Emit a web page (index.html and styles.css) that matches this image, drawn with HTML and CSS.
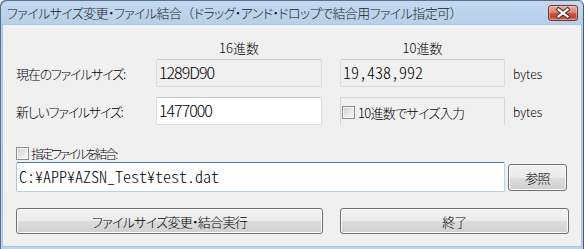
FILE: index.html
```html
<!DOCTYPE html>
<html lang="ja">
<head>
<meta charset="utf-8">
<title>ファイルサイズ変更・ファイル結合</title>
<link rel="stylesheet" href="styles.css">
</head>
<body>
<div class="window">
  <div class="titlebar">
    <div class="title">ファイルサイズ変更・ファイル結合<span class="fw">（</span>ドラッグ・アンド・ドロップで結合用ファイル指定可<span class="fw">）</span></div>
    <div class="close">
      <svg width="30" height="16" viewBox="0 0 30 16">
        <path d="M10.5 4.5 L19.5 11.5 M19.5 4.5 L10.5 11.5" stroke="#4a3a38" stroke-width="4.2" stroke-linecap="square" fill="none"/>
        <path d="M10.5 4.5 L19.5 11.5 M19.5 4.5 L10.5 11.5" stroke="#ffffff" stroke-width="2.2" stroke-linecap="square" fill="none"/>
      </svg>
    </div>
  </div>
  <div class="client">
    <div class="row head">
      <div class="label"></div>
      <div class="colhead hex">16進数</div>
      <div class="colhead dec">10進数</div>
    </div>
    <div class="row">
      <div class="label">現在のファイルサイズ:</div>
      <div class="field hex readonly"><span class="num">1289D90</span></div>
      <div class="field dec readonly"><span class="mono">19,438,992</span></div>
      <div class="unit">bytes</div>
    </div>
    <div class="row gap">
      <div class="label">新しいファイルサイズ:</div>
      <div class="field hex edit"><span class="num">1477000</span></div>
      <div class="groupbox dec">
        <span class="cb"></span><span class="cblabel">10進数でサイズ入力</span>
      </div>
      <div class="unit">bytes</div>
    </div>
    <div class="checkrow">
      <span class="cb"></span><span class="cblabel tight">指定ファイルを結合:</span>
    </div>
    <div class="pathrow">
      <div class="pathbox"><span class="mono">C:¥APP¥AZSN_Test¥test.dat</span></div>
      <div class="btn small">参照</div>
    </div>
    <div class="btnrow">
      <div class="btn exec">ファイルサイズ変更・結合実行</div>
      <div class="btn quit">終了</div>
    </div>
  </div>
</div>
</body>
</html>
```
FILE: styles.css
```css
* { box-sizing: border-box; }
html, body { margin: 0; padding: 0; background: #ffffff; }
body {
  font-family: "Noto Sans CJK JP", "Noto Sans", sans-serif;
  font-size: 13px;
  font-weight: 300;
  color: #000;
}
.window {
  width: 584px;
  height: 249px;
  display: flex;
  flex-direction: column;
  background: linear-gradient(180deg, #c4d9f0 0px, #b7cfea 25px, #bcd4ee 100%);
  border-radius: 6px 6px 0 0;
  box-shadow: inset 1px 1px 0 #5b6f86, inset -1px 0 0 #47596e;
  overflow: hidden;
}
.titlebar {
  height: 25px;
  display: flex;
  align-items: flex-start;
  flex: none;
}
.title {
  flex: 1;
  padding-left: 7px;
  padding-top: 4px;
  line-height: 17px;
  font-size: 13px;
  letter-spacing: -0.6px;
  font-feature-settings: "palt";
  color: #1b1b1b;
  white-space: nowrap;
}
.title .fw { font-feature-settings: normal; }
.close {
  width: 30px;
  height: 16px;
  margin-top: 5px;
  margin-right: 6px;
  border: 1px solid #7a3127;
  border-radius: 3px;
  background: linear-gradient(180deg, #e9aa9d 0%, #d98676 45%, #c8523f 55%, #c24a37 80%, #d3735f 100%);
  box-shadow: inset 0 0 0 1px rgba(255,255,255,0.35);
  display: flex;
  align-items: center;
  justify-content: center;
}
.close svg { display: block; margin: -1px; }
.client {
  flex: 1;
  margin: 0 3px 3px 3px;
  background: #f0f0f0;
  padding: 15px 0 12px 13px;
  box-shadow: 0 0 0 1px #a9c4e2;
}
.row {
  display: flex;
  align-items: center;
  height: 28px;
  font-feature-settings: "palt";
}
.row.head { height: 19px; align-items: flex-start; }
.row.gap { margin-top: 10px; }
.label { width: 140px; flex: none; letter-spacing: -1.2px; }
.colhead { line-height: 16px; text-align: center; }
.hex { width: 166px; flex: none; }
.dec { width: 165px; flex: none; margin-left: 18px; }
.field {
  height: 28px;
  border: 1px solid #dcdcdc;
  border-top-color: #c8c8c8;
  border-radius: 2px;
  padding: 3px 2px 0 2px;
  line-height: 18px;
  white-space: nowrap;
}
.readonly { background: #f0f0f0; }
.edit { background: #ffffff; }
.num {
  font-family: "Noto Sans CJK JP", sans-serif;
  font-weight: 300;
  font-size: 16px;
  letter-spacing: -1px;
}
.mono {
  font-family: "Noto Sans CJK JP", "Noto Sans Mono CJK JP", monospace;
  font-weight: 300;
  font-size: 16px;
  font-feature-settings: "hwid";
  letter-spacing: 0;
}
.unit {
  margin-left: 8px;
  font-family: "Noto Sans CJK JP", sans-serif;
  font-weight: 300;
  font-size: 12px;
  font-feature-settings: normal;
}
.groupbox {
  height: 28px;
  align-self: flex-start;
  border: 1px solid #d5d5d5;
  border-bottom: none;
  display: flex;
  align-items: center;
  padding-left: 1px;
  padding-top: 2px;
}
.cb {
  width: 13px;
  height: 13px;
  flex: none;
  border: 1px solid #8e8f8f;
  background: linear-gradient(135deg, #cfcfcf 0%, #e6e6e6 50%, #f8f8f8 100%);
  box-shadow: inset 0 0 0 1px #f4f4f4;
}
.cblabel { margin-left: 3px; line-height: 13px; font-feature-settings: "palt"; letter-spacing: -0.7px; }
.cblabel.tight { margin-left: 2px; font-size: 12.5px; letter-spacing: -2.3px; }
.checkrow {
  display: flex;
  align-items: center;
  height: 13px;
  margin-top: 22px;
}
.pathrow {
  display: flex;
  align-items: center;
  margin-top: 2px;
  height: 30px;
}
.pathbox {
  width: 489px;
  height: 30px;
  background: #fff;
  border: 1px solid #b5d2ea;
  border-top-color: #3d7bad;
  border-left-color: #a4c9e3;
  border-radius: 2px;
  padding: 4px 2px 0 2px;
  line-height: 18px;
}
.btn {
  display: flex;
  align-items: center;
  justify-content: center;
  border: 1px solid #707070;
  border-radius: 3px;
  background: linear-gradient(180deg, #f2f2f2 0%, #ebebeb 50%, #dddddd 50%, #cfcfcf 100%);
  box-shadow: inset 0 0 0 1px #fbfbfb;
  font-feature-settings: "palt";
  letter-spacing: -0.7px;
  color: #000;
}
.btn.small { width: 59px; height: 27px; margin-left: 3px; }
.btnrow {
  display: flex;
  margin-top: 16px;
  height: 26px;
}
.btn.exec { width: 307px; height: 26px; }
.btn.quit { width: 229px; height: 26px; margin-left: 17px; }
```
